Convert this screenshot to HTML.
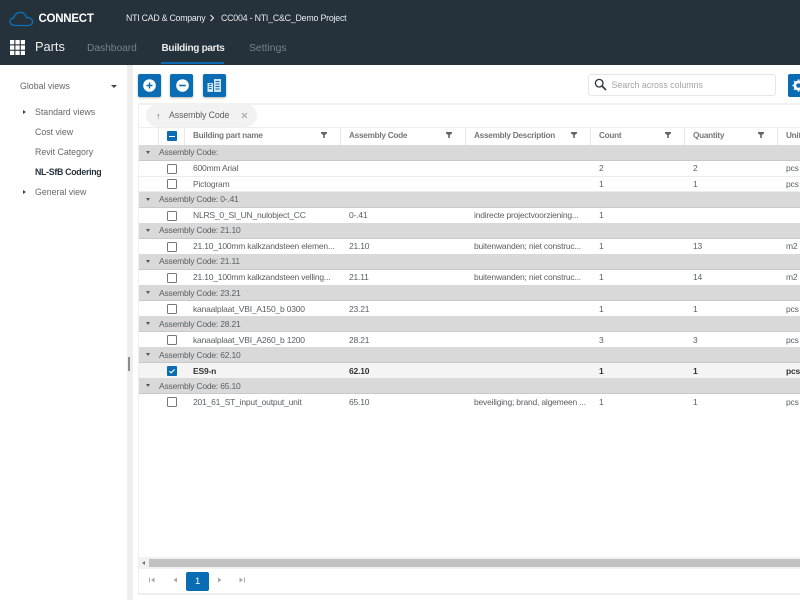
<!DOCTYPE html>
<html><head><meta charset="utf-8"><style>
html,body{margin:0;padding:0;width:800px;height:600px;overflow:hidden;background:#fff;font-family:"Liberation Sans",sans-serif;font-size:8.5px;color:#5a5f63;letter-spacing:-.2px}
div,span,svg{position:absolute;box-sizing:border-box}
.t{white-space:nowrap;line-height:12px}
.g{left:139px;width:661px;background:#d9d9d9;height:16px;border-bottom:1px solid #c9c9c9}
.r{left:139px;width:661px;height:15.5px;background:#fff;border-bottom:1px solid #ececec}
.cb{left:167px;width:10px;height:10px;border:1.3px solid #777;border-radius:1.5px;background:#fff}
.h{top:130px;font-weight:bold;color:#777;font-size:8.2px;letter-spacing:-.25px}
.s{top:128px;width:1px;height:17px;background:#e8e8e8}
.btn{top:74px;width:23px;height:23px;background:#0a6cb3;border-radius:2px;box-shadow:0 1px 2px rgba(0,0,0,.3)}
.ar{width:0;height:0;border-left:3px solid #444;border-top:2.5px solid transparent;border-bottom:2.5px solid transparent}
.dn{left:146px;width:0;height:0;border-top:3.5px solid #555;border-left:2.5px solid transparent;border-right:2.5px solid transparent}
.n{color:#666;font-size:8.8px;letter-spacing:0}
</style></head><body>

<div style="left:0;top:0;width:800px;height:65px;background:#25313b"></div>
<svg style="left:9px;top:11px" width="25" height="16" viewBox="0 0 25 16"><path d="M6 14.500C3 14.500 1 12.800 1 10.400C1 8.200 2.800 6.800 4.800 6.800C5.600 3.400 8.200 1.400 11.200 1.400C14.600 1.400 17 3.800 17.400 6.600C20.800 6.200 23.600 8 23.600 10.800C23.600 13.200 21.600 14.500 19.200 14.500Z" fill="none" stroke="#0a73bd" stroke-width="1.300"/></svg>
<div class="t" style="left:38.500px;top:13px;color:#fff;font-weight:bold;font-size:11.500px;line-height:13px;letter-spacing:-.25px">CONNECT</div>
<div class="t" style="left:126px;top:12px;color:#e8ecee;font-size:8.800px;letter-spacing:-.25px">NTI CAD &amp; Company</div>
<svg style="left:209px;top:14px" width="6" height="8" viewBox="0 0 6 8"><path d="M1.500 1L4.500 4L1.500 7" fill="none" stroke="#e8ecee" stroke-width="1.100"/></svg>
<div class="t" style="left:221px;top:12px;color:#e8ecee;font-size:8.800px;letter-spacing:-.2px">CC004 - NTI_C&amp;C_Demo Project</div>

<svg style="left:10px;top:40px" width="15" height="15" viewBox="0 0 15 15" fill="#fff"><rect x="0" y="0" width="4.300" height="4.300"/><rect x="5.400" y="0" width="4.300" height="4.300"/><rect x="10.800" y="0" width="4.300" height="4.300"/><rect x="0" y="5.400" width="4.300" height="4.300"/><rect x="5.400" y="5.400" width="4.300" height="4.300"/><rect x="10.800" y="5.400" width="4.300" height="4.300"/><rect x="0" y="10.800" width="4.300" height="4.300"/><rect x="5.400" y="10.800" width="4.300" height="4.300"/><rect x="10.800" y="10.800" width="4.300" height="4.300"/></svg>
<div class="t" style="left:35px;top:39px;color:#eef1f3;font-size:12.800px;line-height:15px;letter-spacing:0">Parts</div>
<div class="t" style="left:87px;top:43px;color:#76828b;font-size:10.200px;letter-spacing:0">Dashboard</div>
<div class="t" style="left:161.500px;top:43px;color:#e8ecee;font-size:10px;font-weight:bold;letter-spacing:-.3px">Building parts</div>
<div style="left:161px;top:62px;width:63px;height:2px;background:#0a6cb3"></div>
<div class="t" style="left:249px;top:43px;color:#76828b;font-size:10.400px;letter-spacing:0">Settings</div>

<div style="left:127px;top:65px;width:5.500px;height:535px;background:#eee"></div>
<div style="left:128px;top:357px;width:2px;height:14px;background:#8a8a8a"></div>

<div class="t n" style="left:20px;top:80px">Global views</div>
<div style="left:111px;top:84.500px;width:0;height:0;border-top:3.500px solid #444;border-left:3px solid transparent;border-right:3px solid transparent"></div>
<div class="ar" style="left:23px;top:110px"></div>
<div class="t n" style="left:35px;top:106px">Standard views</div>
<div class="t n" style="left:35px;top:126px">Cost view</div>
<div class="t n" style="left:35px;top:146px">Revit Category</div>
<div class="t n" style="left:35px;top:166px;color:#27323a;font-weight:bold;letter-spacing:-.3px">NL-SfB Codering</div>
<div class="ar" style="left:23px;top:190px"></div>
<div class="t n" style="left:35px;top:186px">General view</div>

<div class="btn" style="left:138px"></div>
<svg style="left:143px;top:79px" width="13" height="13" viewBox="0 0 13 13"><circle cx="6.500" cy="6.500" r="6.300" fill="#fff"/><path d="M3.500 6.500H9.500M6.500 3.500V9.500" stroke="#0a6cb3" stroke-width="1.400"/></svg>
<div class="btn" style="left:170px"></div>
<svg style="left:175.500px;top:79px" width="13" height="13" viewBox="0 0 13 13"><circle cx="6.500" cy="6.500" r="6.300" fill="#fff"/><path d="M3.200 6.500H9.800" stroke="#0a6cb3" stroke-width="1.600"/></svg>
<div class="btn" style="left:203px"></div>
<svg style="left:207px;top:78px" width="15" height="15" viewBox="0 0 15 15"><path d="M0.500 5H6V14H0.500ZM7 1H14V14H7Z" fill="#cfe3f2"/><path d="M2 6.500H4.500M2 8.500H4.500M2 10.500H4.500M8.500 3.500H12.500M8.500 6H12.500M8.500 8.500H12.500M8.500 11H12.500" stroke="#0a6cb3" stroke-width="1"/></svg>

<div style="left:588px;top:74px;width:188px;height:22px;border:1px solid #e6e6e6;border-radius:3px;background:#fff"></div>
<svg style="left:594px;top:78px" width="13" height="13" viewBox="0 0 13 13"><circle cx="5.200" cy="5.200" r="3.800" fill="none" stroke="#2b3640" stroke-width="1.300"/><path d="M8 8L12 12" stroke="#2b3640" stroke-width="1.600"/></svg>
<div class="t" style="left:611.500px;top:78.500px;color:#a4a4a4;font-size:8.800px;letter-spacing:0">Search across columns</div>
<div style="left:788px;top:74px;width:20px;height:23px;background:#0a6cb3;border-radius:2px"></div>
<svg style="left:792px;top:79px" width="13" height="13" viewBox="0 0 13 13"><circle cx="6.500" cy="6.500" r="3.600" fill="none" stroke="#fff" stroke-width="2.600"/><path d="M6.500 0.500V3M6.500 10V12.500M0.500 6.500H3M10 6.500H12.500M2.200 2.200L4 4M9 9L10.800 10.800M2.200 10.800L4 9M9 4L10.800 2.200" stroke="#fff" stroke-width="1.800"/></svg>

<div style="left:138px;top:103px;width:662px;height:2px;background:#f1f1f1"></div>
<div style="left:138px;top:103px;width:1px;height:492px;background:#eee"></div>
<div style="left:146px;top:104px;width:111px;height:23px;border-radius:12px;background:#f2f2f2"></div>
<div class="t" style="left:156px;top:109.500px;color:#666;font-size:9px">↑</div>
<div class="t" style="left:169px;top:109px;color:#5f5f5f;font-size:8.800px;letter-spacing:-.1px">Assembly Code</div>
<svg style="left:240.500px;top:111.500px" width="7" height="7" viewBox="0 0 7 7"><path d="M1 1L6 6M6 1L1 6" stroke="#a8a8a8" stroke-width="1.200"/></svg>

<div style="left:139px;top:127px;width:661px;height:1px;background:#eee"></div>
<div class="s" style="left:158px"></div><div class="s" style="left:184px"></div><div class="s" style="left:340px"></div><div class="s" style="left:465px"></div><div class="s" style="left:590px"></div><div class="s" style="left:684px"></div><div class="s" style="left:777px"></div>
<div style="left:167px;top:131px;width:10px;height:10px;background:#0a6cb3;border-radius:1px"></div>
<div style="left:169px;top:135.500px;width:6px;height:1.300px;background:#fff"></div>
<div class="t h" style="left:193px">Building part name</div>
<div class="t h" style="left:349px">Assembly Code</div>
<div class="t h" style="left:474px">Assembly Description</div>
<div class="t h" style="left:599px">Count</div>
<div class="t h" style="left:693px">Quantity</div>
<div class="t h" style="left:786px">Unit</div>
<svg style="left:321px;top:132px" width="6" height="6" viewBox="0 0 6 6"><path d="M0 0H6V1.500L3.800 3V6H2.200V3L0 1.500Z" fill="#666"/></svg>
<svg style="left:446px;top:132px" width="6" height="6" viewBox="0 0 6 6"><path d="M0 0H6V1.500L3.800 3V6H2.200V3L0 1.500Z" fill="#666"/></svg>
<svg style="left:571px;top:132px" width="6" height="6" viewBox="0 0 6 6"><path d="M0 0H6V1.500L3.800 3V6H2.200V3L0 1.500Z" fill="#666"/></svg>
<svg style="left:665px;top:132px" width="6" height="6" viewBox="0 0 6 6"><path d="M0 0H6V1.500L3.800 3V6H2.200V3L0 1.500Z" fill="#666"/></svg>
<svg style="left:758px;top:132px" width="6" height="6" viewBox="0 0 6 6"><path d="M0 0H6V1.500L3.800 3V6H2.200V3L0 1.500Z" fill="#666"/></svg>

<div class="g" style="top:145px"></div><div class="dn" style="top:150.500px"></div><div class="t" style="left:159px;top:146px">Assembly Code:</div>
<div class="r" style="top:161px"></div><div class="cb" style="top:164px"></div><div class="t" style="left:193px;top:162px">600mm Arial</div><div class="t" style="left:599px;top:162px">2</div><div class="t" style="left:693px;top:162px">2</div><div class="t" style="left:786px;top:162px">pcs</div>
<div class="r" style="top:176.500px"></div><div class="cb" style="top:179px"></div><div class="t" style="left:193px;top:178px">Pictogram</div><div class="t" style="left:599px;top:178px">1</div><div class="t" style="left:693px;top:178px">1</div><div class="t" style="left:786px;top:178px">pcs</div>

<div class="g" style="top:192px"></div><div class="dn" style="top:197.500px"></div><div class="t" style="left:159px;top:193px">Assembly Code: 0-.41</div>
<div class="r" style="top:208px"></div><div class="cb" style="top:210.500px"></div><div class="t" style="left:193px;top:209px">NLRS_0_SI_UN_nulobject_CC</div><div class="t" style="left:349px;top:209px">0-.41</div><div class="t" style="left:474px;top:209px">indirecte projectvoorziening...</div><div class="t" style="left:599px;top:209px">1</div>

<div class="g" style="top:223px"></div><div class="dn" style="top:228.500px"></div><div class="t" style="left:159px;top:224px">Assembly Code: 21.10</div>
<div class="r" style="top:239px"></div><div class="cb" style="top:241.500px"></div><div class="t" style="left:193px;top:240px">21.10_100mm kalkzandsteen elemen...</div><div class="t" style="left:349px;top:240px">21.10</div><div class="t" style="left:474px;top:240px">buitenwanden; niet construc...</div><div class="t" style="left:599px;top:240px">1</div><div class="t" style="left:693px;top:240px">13</div><div class="t" style="left:786px;top:240px">m2</div>

<div class="g" style="top:254px"></div><div class="dn" style="top:259.500px"></div><div class="t" style="left:159px;top:255px">Assembly Code: 21.11</div>
<div class="r" style="top:270px"></div><div class="cb" style="top:272.500px"></div><div class="t" style="left:193px;top:271px">21.10_100mm kalkzandsteen velling...</div><div class="t" style="left:349px;top:271px">21.11</div><div class="t" style="left:474px;top:271px">buitenwanden; niet construc...</div><div class="t" style="left:599px;top:271px">1</div><div class="t" style="left:693px;top:271px">14</div><div class="t" style="left:786px;top:271px">m2</div>

<div class="g" style="top:285px"></div><div class="dn" style="top:290.500px"></div><div class="t" style="left:159px;top:287px">Assembly Code: 23.21</div>
<div class="r" style="top:301px"></div><div class="cb" style="top:304px"></div><div class="t" style="left:193px;top:303px">kanaalplaat_VBI_A150_b 0300</div><div class="t" style="left:349px;top:303px">23.21</div><div class="t" style="left:599px;top:303px">1</div><div class="t" style="left:693px;top:303px">1</div><div class="t" style="left:786px;top:303px">pcs</div>

<div class="g" style="top:316px"></div><div class="dn" style="top:321.500px"></div><div class="t" style="left:159px;top:318px">Assembly Code: 28.21</div>
<div class="r" style="top:332px"></div><div class="cb" style="top:335px"></div><div class="t" style="left:193px;top:334px">kanaalplaat_VBI_A260_b 1200</div><div class="t" style="left:349px;top:334px">28.21</div><div class="t" style="left:599px;top:334px">3</div><div class="t" style="left:693px;top:334px">3</div><div class="t" style="left:786px;top:334px">pcs</div>

<div class="g" style="top:347px"></div><div class="dn" style="top:352.500px"></div><div class="t" style="left:159px;top:349px">Assembly Code: 62.10</div>
<div class="r" style="top:363px;background:#f4f4f4"></div>
<div style="left:167px;top:366px;width:10px;height:10px;background:#0a6cb3;border-radius:1px"></div>
<svg style="left:168px;top:367px" width="8" height="8" viewBox="0 0 8 8"><path d="M1.500 4.200L3.200 5.800L6.500 2.400" fill="none" stroke="#fff" stroke-width="1.100"/></svg>
<div class="t" style="left:193px;top:365px;color:#333;font-weight:bold">ES9-n</div><div class="t" style="left:349px;top:365px;color:#333;font-weight:bold">62.10</div><div class="t" style="left:599px;top:365px;color:#333;font-weight:bold">1</div><div class="t" style="left:693px;top:365px;color:#333;font-weight:bold">1</div><div class="t" style="left:786px;top:365px;color:#333;font-weight:bold">pcs</div>

<div class="g" style="top:378px"></div><div class="dn" style="top:383.500px"></div><div class="t" style="left:159px;top:380px">Assembly Code: 65.10</div>
<div class="r" style="top:394px;border-bottom:0"></div><div class="cb" style="top:397px"></div><div class="t" style="left:193px;top:396px">201_61_ST_input_output_unit</div><div class="t" style="left:349px;top:396px">65.10</div><div class="t" style="left:474px;top:396px">beveiliging; brand, algemeen ...</div><div class="t" style="left:599px;top:396px">1</div><div class="t" style="left:693px;top:396px">1</div><div class="t" style="left:786px;top:396px">pcs</div>

<div style="left:139px;top:557px;width:661px;height:12px;background:#f1f1f1"></div>
<div style="left:149px;top:559px;width:651px;height:8px;background:#c1c1c1"></div>
<div style="left:142px;top:561px;width:0;height:0;border-right:3px solid #777;border-top:2.500px solid transparent;border-bottom:2.500px solid transparent"></div>
<div style="left:138px;top:593px;width:662px;height:1.500px;background:#eee"></div>

<svg style="left:149px;top:577px" width="6" height="6" viewBox="0 0 6 6"><path d="M0.500 0.500V5.500" stroke="#aaa"/><path d="M5.500 0.500V5.500L2 3Z" fill="#aaa"/></svg>
<svg style="left:172px;top:577px" width="6" height="6" viewBox="0 0 6 6"><path d="M5 0.500V5.500L1.500 3Z" fill="#aaa"/></svg>
<div style="left:186px;top:572px;width:23px;height:19px;background:#0a6cb3;border-radius:2px"></div>
<div class="t" style="left:186px;top:575.500px;width:23px;text-align:center;color:#fff;font-size:9.500px">1</div>
<svg style="left:217px;top:577px" width="6" height="6" viewBox="0 0 6 6"><path d="M1 0.500V5.500L4.500 3Z" fill="#aaa"/></svg>
<svg style="left:239px;top:577px" width="6" height="6" viewBox="0 0 6 6"><path d="M5.500 0.500V5.500" stroke="#aaa"/><path d="M0.500 0.500V5.500L4 3Z" fill="#aaa"/></svg>
</body></html>
